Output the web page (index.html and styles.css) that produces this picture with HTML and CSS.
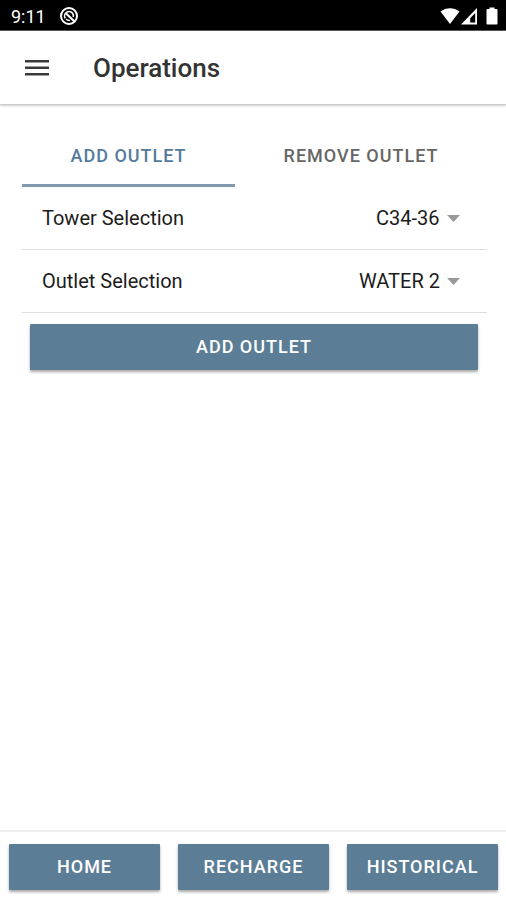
FILE: index.html
```
<!DOCTYPE html>
<html lang="en">
<head>
    <meta charset="UTF-8">
    <meta name="viewport" content="width=device-width, initial-scale=1.0">
    <title>Operations</title>
    <link rel="stylesheet" href="styles.css">
</head>
<body>
    <div class="status-bar">
        <span class="clock">9:11</span>
        <svg class="status-app" width="20" height="20" viewBox="0 0 20 20" fill="none" stroke="#fff">
            <circle cx="10" cy="10" r="8" stroke-width="2"/>
            <path d="M6.2 12.4A4.5 4.5 0 0 1 13.6 7.3Q14.8 9 14.2 11" stroke-width="1.6"/>
            <path d="M6.5 7L15.5 15.5" stroke-width="2.2"/>
            <path d="M7 13A4.5 4.5 0 0 0 11 14.4" stroke-width="1.4"/>
        </svg>
        <div class="status-icons">
            <svg width="20" height="18" viewBox="0 0 20 18" fill="#fff">
                <path d="M0.5 4.5C6 0 14 0 19.5 4.5L10 17Z"/>
            </svg>
            <svg width="18" height="18" viewBox="0 0 18 18">
                <path d="M17 1V17.5H1Z" fill="#fff"/>
                <path d="M15.2 6V15.5H10.2V11.2Z" fill="#000"/>
            </svg>
            <svg class="battery" width="12" height="18" viewBox="0 0 12 18" fill="#fff">
                <path d="M3.5 0.5H8.5V2H10.5Q11.5 2 11.5 3V16.5Q11.5 17.5 10.5 17.5H1.5Q0.5 17.5 0.5 16.5V3Q0.5 2 1.5 2H3.5Z"/>
            </svg>
        </div>
    </div>

    <header class="toolbar">
        <button class="menu-button" type="button" aria-label="Menu">
            <svg width="24" height="18" viewBox="0 0 24 18" fill="#3a3a3a">
                <rect x="0" y="1" width="24" height="2.5"/>
                <rect x="0" y="7.5" width="24" height="2.5"/>
                <rect x="0" y="14" width="24" height="2.5"/>
            </svg>
        </button>
        <h1>Operations</h1>
    </header>

    <main class="content">
        <div class="tabs" role="tablist">
            <button class="tab active" type="button" role="tab" aria-selected="true">ADD OUTLET</button>
            <button class="tab" type="button" role="tab" aria-selected="false">REMOVE OUTLET</button>
        </div>
        <form class="outlet-form">
            <div class="item">
                <label for="tower">Tower Selection</label>
                <select id="tower">
                    <option>C34-36</option>
                </select>
            </div>
            <div class="item">
                <label for="outlet">Outlet Selection</label>
                <select id="outlet">
                    <option>WATER 2</option>
                </select>
            </div>
            <button class="button submit" type="button">ADD OUTLET</button>
        </form>
    </main>

    <footer class="footer">
        <button class="button" type="button">HOME</button>
        <button class="button" type="button">RECHARGE</button>
        <button class="button" type="button">HISTORICAL</button>
    </footer>
</body>
</html>
```

FILE: styles.css
```
* {
    box-sizing: border-box;
}
body {
    display: flex;
    flex-direction: column;
    min-height: 100vh;
    margin: 0;
    background-color: #fff;
    color: #1c1c1c;
    font-family: Roboto, "Liberation Sans", sans-serif;
    font-size: 20px;
}
button,
select {
    font-family: inherit;
    border: none;
    border-radius: 0;
    cursor: pointer;
}
svg {
    display: block;
}

/* Status bar */
.status-bar {
    display: flex;
    align-items: center;
    height: 31px;
    padding: 2px 8px 0 11px;
    background-color: #000;
    border-bottom: 1px solid #555;
    color: #fff;
}
.clock {
    font-size: 18px;
}
.status-app {
    margin-left: 13px;
}
.status-icons {
    display: flex;
    align-items: center;
    margin-left: auto;
}
.battery {
    margin-left: 8px;
}

/* Toolbar */
.toolbar {
    display: flex;
    align-items: center;
    height: 74px;
    padding: 0 25px;
    border-bottom: 1px solid #ccc;
    box-shadow: 0 1px 2px rgba(0,0,0,0.2);
}
.menu-button {
    padding: 0;
    background: none;
}
.toolbar h1 {
    margin: 0 0 0 44px;
    color: #333;
    font-size: 26px;
    font-weight: 500;
}

/* Content */
.content {
    flex: 1;
    padding: 21px 19px 20px 22px;
}
.tabs {
    display: flex;
}
.tab {
    flex: 1 1 auto;
    height: 61px;
    padding: 0;
    background: none;
    border-bottom: 3px solid transparent;
    color: #666;
    font-size: 18px;
    font-weight: 500;
    letter-spacing: 1px;
}
.tab.active {
    border-bottom-color: #7f99ae;
    color: #557b9b;
}
.item {
    display: flex;
    align-items: center;
    justify-content: space-between;
    height: 63px;
    padding: 0 27px 0 20px;
    border-bottom: 1px solid #dedede;
}
.item select {
    appearance: none;
    padding: 0 20px 0 0;
    background: url("data:image/svg+xml,%3Csvg xmlns='http://www.w3.org/2000/svg' width='13' height='7'%3E%3Cpath d='M0 0H13L6.5 7Z' fill='%23999'/%3E%3C/svg%3E") no-repeat right center;
    color: #1c1c1c;
    font-size: 20px;
}

/* Buttons */
.button {
    height: 46px;
    padding: 0 0 2px;
    background-color: #5b7e96;
    border-radius: 1px;
    box-shadow: 0 2px 3px rgba(0,0,0,0.35);
    color: #fff;
    font-size: 18px;
    font-weight: 500;
    letter-spacing: 1px;
}
.submit {
    display: block;
    width: calc(100% - 17px);
    margin: 11px 9px 0 8px;
}

/* Footer */
.footer {
    display: grid;
    grid-template-columns: repeat(3, 1fr);
    gap: 18px;
    padding: 12px 8px 10px 9px;
    border-top: 2px solid #eee;
}
```
